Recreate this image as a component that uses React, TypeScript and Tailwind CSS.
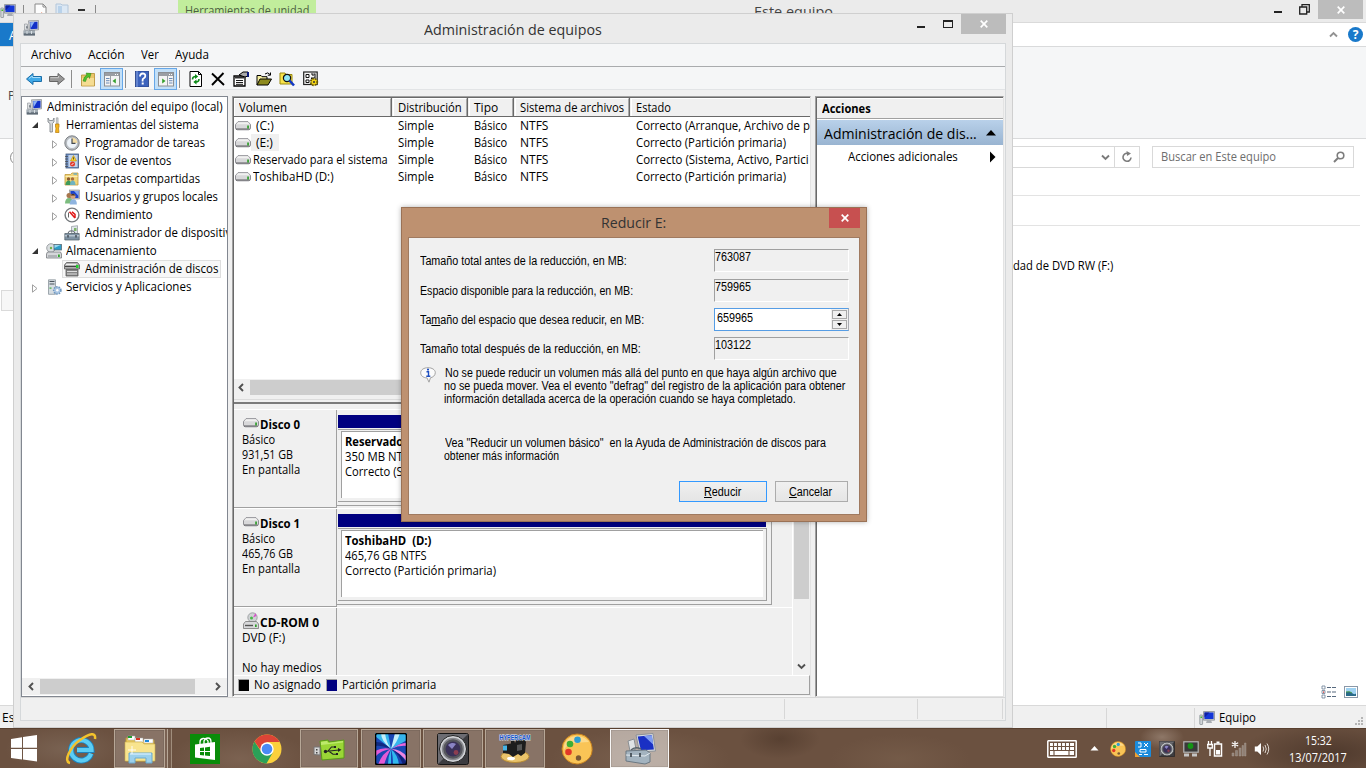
import { useLayoutEffect, useRef, useState } from 'react';
import type { ReactNode } from 'react';

function T({ w, children, className = '' }: { w: number; children: ReactNode; className?: string }) {
  const ref = useRef<HTMLSpanElement>(null);
  const [scale, setScale] = useState(1);
  useLayoutEffect(() => {
    if (ref.current && ref.current.offsetWidth) {
      setScale(w / ref.current.offsetWidth);
    }
  }, [w]);
  return (
    <span className={`inline-block shrink-0 whitespace-pre ${className}`} style={{ width: w }}>
      <span ref={ref} className="inline-block origin-left" style={{ transform: `scaleX(${scale})` }}>
        {children}
      </span>
    </span>
  );
}

function Svg({ children, s = 16, box = '0 0 16 16', className = '' }: { children: ReactNode; s?: number; box?: string; className?: string }) {
  return (
    <svg width={s} height={s} viewBox={box} className={`shrink-0 ${className}`}>
      {children}
    </svg>
  );
}

const ComputerIcon = () => (
  <Svg>
    <path d="M5.500.8l10-.3v9.300l-9 .7z" fill="#d3d6d9" stroke="#85898e" strokeWidth=".7" />
    <path d="M6.800 2l7.700-.3v7l-7 .6z" fill="#1230c8" />
    <path d="M7 2.200l4.500-.2-3.700 6z" fill="#8fb4f4" />
    <path d="M1.500 4h2.800l1 6h-3.800z" fill="#dfe2e4" stroke="#8a8f94" strokeWidth=".6" />
    <path d="M3.300 6.500l1-1 .5 3h-1.500z" fill="#58606a" />
    <path d="M.5 10.500h11.500v5H.5z" fill="#75818c" />
    <path d="M.5 12h11.500M4 11v3M8.500 11v3" stroke="#dfe5ea" strokeWidth=".9" />
    <path d="M1 14.800h11" stroke="#56616c" />
  </Svg>
);
const MonitorIcon = () => (
  <Svg>
    <path d="M4.500 1.500h11v8.700h-11z" fill="#bfc3c8" stroke="#8d9298" strokeWidth=".8" />
    <path d="M5.500 2.500h9v6.500h-9z" fill="#1336d8" />
    <path d="M5.500 2.500h5l-5 5z" fill="#1020a0" />
    <path d="M8 10h4l1 3H7z" fill="#a9adb2" />
    <rect x=".8" y="5" width="2.800" height="9.500" rx=".5" fill="#d2d5d8" stroke="#80868c" strokeWidth=".7" />
    <rect x="1.500" y="6.500" width="1.500" height="1.500" fill="#3ec02c" />
  </Svg>
);
const ToolsIcon = () => (
  <Svg>
    <path d="M2 1v4l2 1.500V15h2.400V6.500L8 5V1L6.800 3.500H3.400z" fill="#d9dcdf" stroke="#777c82" strokeWidth=".8" />
    <path d="M10.300.8h1.800v6h-1.800z" fill="#cfd3d6" stroke="#888" strokeWidth=".5" />
    <path d="M9.500 7h3.500v3l-.5 1 .5 4.500H9.500l.5-4.500-.5-1z" fill="#f5b51e" stroke="#b67a08" strokeWidth=".7" />
  </Svg>
);
const ClockIcon = () => (
  <Svg>
    <circle cx="8" cy="8" r="7.200" fill="#b9bdc2" stroke="#73777c" strokeWidth=".9" />
    <circle cx="8" cy="8" r="5.500" fill="#eef4fa" stroke="#9a9ea3" strokeWidth=".5" />
    <path d="M8 8V2.600A5.400 5.400 0 0 1 13.400 8z" fill="#f3dca4" />
    <path d="M8 3.500V8.300h3.500" fill="none" stroke="#444a52" strokeWidth="1.200" />
  </Svg>
);
const EventIcon = () => (
  <Svg>
    <rect x="2" y="1" width="12.500" height="14" fill="#6d8fc4" stroke="#42597e" strokeWidth=".8" />
    <rect x="4.500" y="2" width="9" height="12" fill="#c3d3ea" />
    <path d="M1 3.500h3M1 6h3M1 8.500h3M1 11h3M1 13.500h3" stroke="#444" strokeWidth=".7" />
    <path d="M9.500 2.500l3 5.500h-6z" fill="#ffd42e" stroke="#b88b00" strokeWidth=".6" />
    <path d="M9.500 4.300v2.200" stroke="#333" strokeWidth=".8" />
    <circle cx="8.500" cy="11" r="2.500" fill="#e23a2c" />
    <path d="M7.500 12l2-2" stroke="#fff" strokeWidth=".9" />
  </Svg>
);
const SharedIcon = () => (
  <Svg>
    <path d="M1 3.500h5.500L8 2h6v12H1z" fill="#f2d578" stroke="#c09a3c" strokeWidth=".8" />
    <path d="M9.500 3h3.500" stroke="#4aa3d8" strokeWidth="1.200" />
    <path d="M1.500 5.500h12" stroke="#fbecb4" />
    <circle cx="4.500" cy="8" r="1.700" fill="#8a5a30" />
    <circle cx="8.500" cy="8" r="1.700" fill="#a86c3c" />
    <path d="M1.500 14c0-3 1.500-4.500 3.200-4.500S7 11 7 14z" fill="#3f9a5a" />
    <path d="M6 14c0-3 1.200-4.500 2.800-4.500S11.500 11 11.500 14z" fill="#6fb3c0" />
  </Svg>
);
const UsersIcon = () => (
  <Svg>
    <rect x="5.500" y="1" width="10" height="9" fill="#c3c7cc" stroke="#888" strokeWidth=".6" />
    <rect x="6.500" y="2" width="8" height="7" fill="#1c44cc" />
    <path d="M10 2h4.500v5z" fill="#87a9ee" />
    <circle cx="5" cy="6.500" r="2.500" fill="#a8764c" />
    <path d="M1 14.500c0-3.500 1.500-5.500 4-5.500s4 2 4 5.500z" fill="#7cbc7e" />
    <circle cx="9" cy="7.300" r="2.500" fill="#d8a67c" />
    <path d="M6.700 6.500a2.500 2.500 0 0 1 4.700 0z" fill="#4a3424" />
    <path d="M5.700 15.500c0-3.500 1.300-5.300 3.600-5.300s3.600 1.800 3.600 5.300z" fill="#8fb4e0" />
  </Svg>
);
const PerfIcon = () => (
  <Svg>
    <circle cx="8" cy="8" r="6.900" fill="#fff" stroke="#74787c" strokeWidth="1.400" />
    <path d="M4.500 10.500V5.500" fill="none" stroke="#555" strokeWidth=".9" />
    <path d="M5.500 4.800l5.500 6.200M8 4.800l3 2.500v3.700" stroke="#e01818" fill="none" strokeWidth="1.500" />
  </Svg>
);
const DeviceIcon = () => (
  <Svg>
    <path d="M7.500 1.500l6-.8v7.800h-6z" fill="#dfe6ea" stroke="#8b9298" strokeWidth=".7" />
    <rect x="10" y="3" width="2.500" height="3" fill="#7fb56a" />
    <path d="M4 8l1.500-2h4L11 8" fill="none" stroke="#555d66" />
    <path d="M.8 8.500h14.400v6.500H.8z" fill="#7f93a4" stroke="#4f5b66" strokeWidth=".7" />
    <path d="M.8 10.800h14.400" stroke="#d3dce4" />
    <path d="M4 10v2.500M12 10v2.500" stroke="#2f3840" strokeWidth="1.200" />
  </Svg>
);
const StorageIcon = () => (
  <Svg>
    <circle cx="5" cy="5" r="4.300" fill="#d9dddf" stroke="#8c9094" strokeWidth=".8" />
    <circle cx="5" cy="5" r="1.200" fill="#71b048" />
    <rect x="8" y="1.500" width="7.500" height="5.500" fill="#2d9cc9" stroke="#5b6b74" strokeWidth=".8" />
    <path d="M8.500 2h6l-6 3z" fill="#9bd9ef" />
    <path d="M1.500 9h13l1 2v4h-15v-4z" fill="#d5d7da" stroke="#777b80" strokeWidth=".8" />
    <path d="M2 13h9" stroke="#8a8e93" />
    <rect x="12" y="11.500" width="1.800" height="2.500" fill="#2fa82a" />
  </Svg>
);
const DiskMgmtIcon = () => (
  <Svg>
    <path d="M2.500 1.500h11l2 2.500v4h-15V4z" fill="#b5b5b5" stroke="#555" strokeWidth=".8" />
    <path d="M1 5.500h11" stroke="#444" strokeWidth="1.100" />
    <path d="M2 3.500h10" stroke="#eee" />
    <rect x="12" y="4" width="2.500" height="3" fill="#1fd02a" />
    <path d="M2 8.500h12v6.500H2z" fill="#858585" stroke="#5a5a5a" strokeWidth=".8" />
    <path d="M3 10.500h10M3 13h10" stroke="#ddd" />
  </Svg>
);
const ServicesIcon = () => (
  <Svg>
    <path d="M2.500.8h7v14.500h-7z" fill="#d6dde2" stroke="#8b959d" strokeWidth=".8" />
    <path d="M3.500 2.500h5M3.500 5h5" stroke="#4a545c" strokeWidth="1.100" />
    <rect x="3.500" y="8.500" width="2" height="1.200" fill="#3fae3a" />
    <circle cx="11.300" cy="11.300" r="3.400" fill="#bcd3ea" stroke="#6f97c0" strokeWidth="2" strokeDasharray="1.500 .9" />
    <circle cx="11.300" cy="11.300" r="2.800" fill="#a8c4e2" />
    <circle cx="11.300" cy="11.300" r="1.200" fill="#fff" />
  </Svg>
);
const DriveIcon = ({ className = '' }: { className?: string }) => (
  <svg width="16" height="10" viewBox="0 0 16 10" className={`shrink-0 ${className}`}>
    <path d="M3 .7h10l2.500 2.800v3.500q0 1.800-2 1.800h-11q-2 0-2-1.800V3.500z" fill="#d8d8da" stroke="#85858a" strokeWidth=".9" />
    <path d="M3 1.200h10l1.800 2H1.300z" fill="#f0f0f0" />
    <path d="M1 8h13.500" stroke="#68686c" strokeWidth="1.100" />
    <rect x="12.200" y="4.500" width="1.700" height="3" fill="#2f9e2a" />
  </svg>
);
const CdIcon = () => (
  <svg width="16" height="18" viewBox="0 0 16 18" className="shrink-0">
    <circle cx="9.500" cy="5.500" r="4.700" fill="#cfd2d4" stroke="#929698" strokeWidth=".8" />
    <path d="M10 5.500l2.500-4.500 1 3z" fill="#d453c8" />
    <circle cx="8.500" cy="6" r="1.500" fill="#49b64a" />
    <path d="M2.500 9.500h11l2 2.500v4.500H.5V12z" fill="#d7d8da" stroke="#777" strokeWidth=".8" />
    <path d="M2 13.500h8" stroke="#555" strokeWidth="1.400" />
    <rect x="12" y="12.500" width="1.700" height="2.500" fill="#2f9e2a" />
  </svg>
);

const Chevron = ({ dir, color = '#505050' }: { dir: 'l' | 'r' | 'd' | 'u'; color?: string }) => {
  const d = { l: 'M6 1L2.500 4.500 6 8', r: 'M3 1L6.500 4.500 3 8', d: 'M1 2.500L4.500 6 8 2.500', u: 'M1 6.500L4.500 3 8 6.500' }[dir];
  return (
    <Svg s={9} box="0 0 9 9">
      <path d={d} fill="none" stroke={color} strokeWidth="1.900" />
    </Svg>
  );
};

const CloseX = ({ s = 8 }: { s?: number }) => (
  <Svg s={s} box="0 0 8 8">
    <path d="M.7.7l6.600 6.600M7.300.7L.7 7.300" stroke="#fff" strokeWidth="1.700" />
  </Svg>
);

/* ---------- Explorer window, mostly covered ---------- */
function Explorer() {
  return (
    <div className="absolute left-0 top-0 flex h-[728px] w-[1366px] flex-col bg-white">
      <div className="flex h-[23px] shrink-0 border-b border-[#dadada] bg-[#ebebeb]">
        <div className="flex w-[178px] gap-[7px] pt-[3px]">
          <MonitorIcon />
          <div className="mt-0.5 h-4 w-px bg-[#8a8a8a]" />
          <Svg className="ml-px">
            <path d="M3 1h8l3 3v12H3z" fill="#fdfdfd" stroke="#8a8a8a" />
            <path d="M11 1v3h3" fill="none" stroke="#8a8a8a" />
            <path d="M9 9l6 4-4 1z" fill="#e2744a" />
          </Svg>
          <Svg>
            <path d="M1 1h5l1 1h6v14H1z" fill="#dce8f4" stroke="#b3c6da" />
            <path d="M3 3h4v12H3z" fill="#b9d2ea" />
          </Svg>
          <div className="mt-[6px] h-[2px] w-[7px] bg-[#333]" />
          <div className="ml-[3px] mt-0.5 h-4 w-px bg-[#8a8a8a]" />
        </div>
        <div className="h-[22px] w-[138px] bg-[#c1ed9c] pl-[7px] pt-px leading-[19px] text-[#4d5f42]">
          <T w={124}>Herramientas de unidad</T>
        </div>
        <div className="ml-[438px] text-[15px] leading-[23px] text-[#444]">
          <T w={79}>Este equipo</T>
        </div>
        <div className="ml-auto flex">
          <div className="mr-[17px] mt-[11px] h-[2px] w-2 bg-[#222]" />
          <Svg s={11} box="0 0 11 11" className="mr-[8px] mt-1">
            <path d="M.7 3h7v7h-7zM3 3V.7h7.300v7.300H8" fill="none" stroke="#222" strokeWidth="1.300" />
          </Svg>
          <div className="mr-[3px] flex h-[19px] w-[45px] items-center justify-center bg-[#bcbcbc]">
            <CloseX />
          </div>
        </div>
      </div>
      <div className="flex h-[24px] shrink-0 border-b border-[#d9dadb] bg-white">
        <div className="h-[23px] w-[60px] bg-[#1979ca] pl-[9px] leading-[25px] text-white">Archivo</div>
        <div className="ml-auto flex items-center gap-[10px] pr-[3px]">
          <Chevron dir="u" color="#929292" />
          <div className="flex h-[15px] w-[15px] items-center justify-center rounded-full bg-[#1979ca] text-[12px] font-bold leading-none text-white">?</div>
        </div>
      </div>
      <div className="h-[92px] shrink-0 border-b border-[#d9dadb] bg-[#f5f6f7] pl-2 pt-[41px] leading-4 text-[#444]">Propiedades</div>
      <div className="flex h-[56px] shrink-0 pt-[7px]">
        <div className="ml-[10px] mt-1 h-[15px] w-[15px] rounded-full border border-[#8a8a8a]" />
        <div className="ml-auto flex h-[22px] w-[900px] items-center justify-end border border-[#d9d9d9] text-[#6d6d6d]">
          <Chevron dir="d" color="#7a7a7a" />
          <div className="ml-[4px] h-full w-px bg-[#d9d9d9]" />
          <Svg s={12} box="0 0 12 12" className="mx-[6px]">
            <path d="M10 6.500A4 4 0 1 1 6.500 2.300" fill="none" stroke="#7d7d7d" strokeWidth="1.600" />
            <path d="M5.500 0l4.500 2.500L6 5z" fill="#7d7d7d" />
          </Svg>
        </div>
        <div className="ml-3 mr-[12px] flex h-[22px] w-[202px] items-center justify-between border border-[#d9d9d9] px-2 leading-5 text-[#6d6d6d]">
          <T w={115}>Buscar en Este equipo</T>
          <Svg s={12} box="0 0 12 12">
            <circle cx="7.500" cy="4.500" r="3.300" fill="none" stroke="#7d7d7d" strokeWidth="1.600" />
            <path d="M5 7L1 11" stroke="#7d7d7d" strokeWidth="2" />
          </Svg>
        </div>
      </div>
      <div className="ml-[200px] mr-[6px] h-[31px] shrink-0 border-b border-t border-[#e3e3e3]" />
      <div className="flex flex-1">
        <div className="ml-px mt-[64px] h-[21px] w-[40px] border border-[#dadada] bg-[#f7f7f7]" />
        <div className="ml-[972px] mt-[30px] leading-5">
          <T w={100}>dad de DVD RW (F:)</T>
        </div>
        <div className="ml-auto mr-[7px] flex items-end gap-[6px] pb-[5px]">
          <Svg>
            <path d="M1 2h3v3H1zM1 6.500h3v3H1zM1 11h3v3H1z" fill="#fff" stroke="#6b7f96" strokeWidth=".8" />
            <rect x="2" y="7.500" width="1.200" height="1.200" fill="#d02020" />
            <path d="M6 3.500h4M11 3.500h4M6 8h4M11 8h4M6 12.500h4M11 12.500h4" stroke="#56687e" strokeWidth="1.200" />
          </Svg>
          <Svg>
            <rect x="1.500" y="2.500" width="13" height="11" fill="#fff" stroke="#8a98a8" />
            <rect x="3" y="4" width="10" height="8" fill="#9fd2f2" />
            <path d="M3 12V8q4-1 6 1t4 .5V12z" fill="#286a8a" />
            <path d="M3 8q4-1 6 1" stroke="#4a9a48" fill="none" />
          </Svg>
        </div>
      </div>
      <div className="flex h-[23px] shrink-0 items-center border-t border-[#d9d9d9] bg-[#f0f0f0] pt-px">
        <span className="w-[1106px] pl-0.5">Este equipo</span>
        <div className="h-5 w-[88px] border-l border-[#d7d7d7]" />
        <div className="flex h-5 flex-1 items-center gap-1 border-l border-[#d7d7d7] pl-1">
          <MonitorIcon />
          <T w={37}>Equipo</T>
          <Svg s={9} box="0 0 9 9" className="ml-auto mr-[2px] mt-2">
            <path d="M6 0h2v2H6zM3 3h2v2H3zM6 3h2v2H6zM0 6h2v2H0zM3 6h2v2H3zM6 6h2v2H6z" fill="#b5b5b5" />
          </Svg>
        </div>
      </div>
    </div>
  );
}

/* ---------- Toolbar ---------- */
const Sep = ({ className = '' }: { className?: string }) => <div className={`h-[18px] w-px bg-[#8d8d8d] ${className}`} />;

const PaneIcon = ({ flip = false }: { flip?: boolean }) => (
  <Svg>
    <rect x=".5" y="1.500" width="15" height="13.500" fill="#f4f4f4" stroke="#8b8f94" />
    <path d="M1 3.500h14" stroke="#9a9ea4" strokeWidth="3" />
    <path d="M11 3.500h1M13 3.500h1" stroke="#fff" />
    {flip ? (
      <>
        <path d="M9.500 5v10" stroke="#9a9ea4" />
        <path d="M11 7.500h3.500M11 9.700h3.500M11 12h3.500" stroke="#6b8cb8" />
        <path d="M4.200 7.500v5L7.500 10z" fill="#35a02c" />
      </>
    ) : (
      <>
        <path d="M6.500 5v10" stroke="#9a9ea4" />
        <path d="M2 7.500h3.500M2 9.700h3.500M2 12h3.500" stroke="#6b8cb8" />
        <path d="M11.800 7.500v5L8.500 10z" fill="#35a02c" />
      </>
    )}
  </Svg>
);

function Toolbar() {
  return (
    <div className="flex h-[23px] shrink-0 items-center border-b border-[#e2e4e6] bg-[#f5f6f7] pl-[5px] pt-px">
      <Svg>
        <path d="M.5 8L7 2.500v3h8.500v5H7v3z" fill="#3fa9e8" stroke="#1c6ea8" />
        <path d="M3 7.500L6.300 5v1.500h8" fill="none" stroke="#a5dcfa" />
      </Svg>
      <Svg className="ml-[7px]">
        <path d="M15.500 8L9 2.500v3H.5v5H9v3z" fill="#989898" stroke="#666" />
        <path d="M1.500 6.700h8V5" fill="none" stroke="#c8c8c8" />
      </Svg>
      <Sep className="ml-[6px]" />
      <Svg className="ml-[8px]">
        <path d="M1.500 4h5l1-1.500h7V15h-13z" fill="#eac56a" stroke="#b48d34" strokeWidth=".8" />
        <path d="M2 7h12v7.500H2z" fill="#f5dc92" />
        <path d="M3 10q1-5 4-6L6 2l5 .5-1.500 5-1-2q-2 1-3 5z" fill="#4fc02c" stroke="#2a8418" strokeWidth=".5" />
      </Svg>
      <div className="ml-[4px] flex h-[22px] w-[23px] items-center justify-center border border-[#66a7e8] bg-[#c2dff7]"><PaneIcon /></div>
      <Sep className="ml-[2px]" />
      <Svg className="ml-[8px]">
        <rect x="1.500" y="0" width="13" height="16" fill="#3c63bd" stroke="#1e3a80" strokeWidth=".8" />
        <path d="M3 0v16" stroke="#87a4e2" />
        <path d="M6 5.500q0-3 2.700-3t2.600 2.600q0 1.400-1.500 2.200T8.600 9.500v1" fill="none" stroke="#fff" strokeWidth="1.800" />
        <rect x="7.700" y="11.500" width="2" height="2" fill="#fff" />
      </Svg>
      <div className="ml-[4px] flex h-[22px] w-[23px] items-center justify-center border border-[#66a7e8] bg-[#c2dff7]"><PaneIcon flip /></div>
      <Sep className="ml-[2px]" />
      <Svg className="ml-[8px]">
        <path d="M2 .5h8.500l3 3v12H2z" fill="#fff" stroke="#000" />
        <path d="M10.500.5v3h3" fill="none" stroke="#000" />
        <path d="M4.500 8.500q0-3 3-3M11 8q0 3-3 3" fill="none" stroke="#0d8a18" strokeWidth="1.500" />
        <path d="M7 3l3.200 2.500L7 8zM8.500 8.500L5.300 11l3.200 2.500z" fill="#0d8a18" />
      </Svg>
      <Svg className="ml-[6px]">
        <path d="M2 2.500L14 14M13.500 2L2 14" stroke="#000" strokeWidth="1.900" />
      </Svg>
      <Svg className="ml-[7px]">
        <path d="M1 5h11v10H1z" fill="#fff" stroke="#000" strokeWidth="1.300" />
        <path d="M2 5h9v2.500H2z" fill="#333" />
        <path d="M3 9.500h7M3 11.500h7M3 13.300h7" stroke="#000" strokeWidth=".9" />
        <path d="M6 4l4-3h5v4l-3 1-3-1z" fill="#aaa" stroke="#000" />
        <path d="M14 1h2v5h-2z" fill="#0b1a7a" />
      </Svg>
      <Svg className="ml-[7px]">
        <path d="M1 14V4.500h4l1 1.200h5V8" fill="#f7f0a0" stroke="#000" />
        <path d="M1 14l3-6h11.500L12 14z" fill="#8d8a1e" stroke="#000" />
        <path d="M9 3q3-2.500 5 .5M14.500 1.500v2.700h-2.700" fill="none" stroke="#000" />
      </Svg>
      <Svg className="ml-[7px]">
        <path d="M1 2h5l1 1.500h6V13H1z" fill="#f8e34a" stroke="#9a8a10" />
        <circle cx="8" cy="7" r="3.600" fill="#8fe6f5" stroke="#111" strokeWidth="1.200" />
        <path d="M10.500 9.500l4.500 5" stroke="#1238c4" strokeWidth="2.600" />
      </Svg>
      <Svg className="ml-[8px]">
        <rect x=".7" y="1" width="13.500" height="12.500" fill="#f5f5f5" stroke="#222" strokeWidth="1.200" />
        <path d="M3 3.500h3v3H3zM3 9h3v2.500H3z" fill="#fff" stroke="#111" />
        <path d="M8 3h2v2M11 3h1v4H8M8 8h2" stroke="#111" fill="none" strokeWidth="1.100" />
        <circle cx="11" cy="11" r="3.200" fill="#f2d418" stroke="#6a5a00" strokeWidth="2" strokeDasharray="1.600 1" />
        <circle cx="11" cy="11" r="2.400" fill="#f2d418" />
        <circle cx="11" cy="11" r="1" fill="#333" />
      </Svg>
    </div>
  );
}

/* ---------- Tree ---------- */
type Node = { level: number; arrow?: 'open' | 'closed'; icon: ReactNode; label: string; w: number; sel?: boolean };
const tree: Node[] = [
  { level: 0, icon: <ComputerIcon />, label: 'Administración del equipo (local)', w: 176 },
  { level: 1, arrow: 'open', icon: <ToolsIcon />, label: 'Herramientas del sistema', w: 133 },
  { level: 2, arrow: 'closed', icon: <ClockIcon />, label: 'Programador de tareas', w: 120 },
  { level: 2, arrow: 'closed', icon: <EventIcon />, label: 'Visor de eventos', w: 86 },
  { level: 2, arrow: 'closed', icon: <SharedIcon />, label: 'Carpetas compartidas', w: 115 },
  { level: 2, arrow: 'closed', icon: <UsersIcon />, label: 'Usuarios y grupos locales', w: 133 },
  { level: 2, arrow: 'closed', icon: <PerfIcon />, label: 'Rendimiento', w: 68 },
  { level: 2, icon: <DeviceIcon />, label: 'Administrador de dispositivos', w: 158 },
  { level: 1, arrow: 'open', icon: <StorageIcon />, label: 'Almacenamiento', w: 91 },
  { level: 2, icon: <DiskMgmtIcon />, label: 'Administración de discos', w: 133, sel: true },
  { level: 1, arrow: 'closed', icon: <ServicesIcon />, label: 'Servicios y Aplicaciones', w: 125 },
];
const indent = ['pl-[4px]', 'pl-[9px]', 'pl-[29px]'];

function Tree() {
  return (
    <div className="flex w-[207px] shrink-0 flex-col overflow-hidden border border-[#828790] bg-white pt-px">
      {tree.map((n) => (
        <div key={n.label} className={`flex h-[18px] shrink-0 items-center ${indent[n.level]}`}>
          {n.level > 0 && (
            <span className={n.level === 1 ? 'flex w-[15px] shrink-0' : 'flex w-[13px] shrink-0'}>
              {n.arrow === 'closed' && (
                <Svg s={9} box="0 0 9 9" className="mt-0.5">
                  <path d="M1.500.8v7.400L6 4.500z" fill="#fff" stroke="#a0a0a0" />
                </Svg>
              )}
              {n.arrow === 'open' && (
                <Svg s={8} box="0 0 8 8">
                  <path d="M7 1v6H1z" fill="#333" />
                </Svg>
              )}
            </span>
          )}
          <div className={`flex h-[18px] shrink-0 items-center border-y border-r ${n.sel ? 'ml-[-2px] border-l border-[#dedede] bg-[#f7f7f7] pl-px pr-[2px]' : 'border-transparent'}`}>
            {n.icon}
            <T w={n.w} className={n.level === 1 ? 'ml-[4px]' : 'ml-[5px]'}>{n.label}</T>
          </div>
        </div>
      ))}
      <div className="mb-px mt-auto flex h-[17px] items-center bg-[#f0f0f0]">
        <div className="flex w-[18px] justify-center"><Chevron dir="l" /></div>
        <div className="h-[15px] w-[155px] bg-[#cdcdcd]" />
        <div className="flex flex-1 justify-end pr-[5px]"><Chevron dir="r" /></div>
      </div>
    </div>
  );
}

/* ---------- Volumes and disks ---------- */
const volumes = [
  { name: '(C:)', w: 18, pad: 'pl-[5px]', status: 'Correcto (Arranque, Archivo de p', sw: 174 },
  { name: '(E:)', w: 17, pad: 'pl-[5px] pr-[6px] bg-[#f0f0f0]', status: 'Correcto (Partición primaria)', sw: 150 },
  { name: 'Reservado para el sistema', w: 135, pad: 'pl-[2px]', status: 'Correcto (Sistema, Activo, Partici', sw: 173 },
  { name: 'ToshibaHD (D:)', w: 81, pad: 'pl-[2px]', status: 'Correcto (Partición primaria)', sw: 150 },
];

function Head({ cls, w, children }: { cls: string; w: number; children: string }) {
  return (
    <div className={`flex h-full shrink-0 items-center border-r border-[#696969] ${cls}`}>
      <div className="flex h-full w-full items-center border-l border-r border-t border-l-white border-r-[#a8a8a8] border-t-white pl-[4px]">
        <T w={w}>{children}</T>
      </div>
    </div>
  );
}

function VolumeList() {
  return (
    <div className="flex h-[306px] shrink-0 flex-col overflow-hidden bg-white">
      <div className="flex h-[19px] shrink-0 border-b border-[#696969] bg-[#f0f0f0]">
        <Head cls="w-[158px]" w={48}>Volumen</Head>
        <Head cls="w-[76px] pl-px" w={64}>Distribución</Head>
        <Head cls="w-[46px] pl-px" w={24}>Tipo</Head>
        <Head cls="w-[116px] pl-px" w={104}>Sistema de archivos</Head>
        <Head cls="w-[190px] pl-px" w={35}>Estado</Head>
      </div>
      {volumes.map((v) => (
        <div key={v.name} className="flex h-[17px] shrink-0 items-center">
          <div className="flex h-full w-[164px] shrink-0 items-center pl-px">
            <DriveIcon />
            <span className={`flex h-full items-center ${v.pad}`}><T w={v.w}>{v.name}</T></span>
          </div>
          <T w={36} className="mr-[40px]">Simple</T>
          <T w={33} className="mr-[13px]">Básico</T>
          <T w={28} className="mr-[88px]">NTFS</T>
          <T w={v.sw}>{v.status}</T>
        </div>
      ))}
      <div className="mt-auto flex h-[17px] shrink-0 items-center bg-[#f0f0f0]">
        <div className="flex w-[16px] shrink-0 justify-center pr-px"><Chevron dir="l" /></div>
        <div className="h-[15px] w-[480px] bg-[#cdcdcd]" />
      </div>
      <div className="h-[6px] shrink-0 bg-[#f0f0f0] pt-[3px]"><div className="h-px bg-[#dcdcdc]" /></div>
      <div className="h-[2px] shrink-0 bg-[#7b7b7b]" />
    </div>
  );
}

type Line = { t: string; w: number };
function DiskRow({ icon, name, nw, lines, part }: { icon: ReactNode; name: string; nw: number; lines: Line[]; part?: Line[] }) {
  return (
    <div className="flex h-[99px] w-[559px] shrink-0 border-t border-white">
      <div className="flex w-[103px] shrink-0 flex-col border-b border-r border-[#a0a0a0] pl-[8px] pt-[6px]">
        <div className="flex h-[16px] items-end pl-px font-bold leading-[15px]">{icon}<T w={nw} className="ml-px">{name}</T></div>
        {lines.map((l, i) => (
          <div key={i} className="h-[15px] leading-[15px]"><T w={l.w}>{l.t}</T></div>
        ))}
      </div>
      {part && (
        <div className="mb-[2px] flex w-[435px] flex-col border-b border-r border-[#a0a0a0] pl-px pr-[4px] pt-[5px]">
          <div className="h-[13px] w-[428px] bg-[#000080]" />
          <div className="mb-[3px] mt-px flex flex-1 border-b border-r border-t border-[#a0a0a0] pb-[3px] pl-[3px] pr-[3px] pt-px">
            <div className="flex-1 border-l border-t border-[#a0a0a0] bg-white pl-[3px] pt-[2px] leading-[15px]">
              {part.map((l, i) => (
                <div key={i} className={i === 0 ? 'h-[15px] font-bold' : 'h-[15px]'}><T w={l.w}>{l.t}</T></div>
              ))}
            </div>
          </div>
        </div>
      )}
    </div>
  );
}

function Middle() {
  return (
    <div className="ml-1 flex w-[579px] shrink-0 border border-b-[#f8f8f8] border-l-[#a0a0a0] border-r-[#e3e3e3] border-t-[#a0a0a0]">
      <div className="flex min-w-0 flex-1 flex-col overflow-hidden border-l border-t border-[#696969] bg-[#f0f0f0]">
        <VolumeList />
        <div className="flex h-[271px] shrink-0 overflow-hidden">
          <div className="flex h-full w-[559px] flex-col border-r border-white pt-[5px]">
            <DiskRow
              icon={<DriveIcon className="mb-[4px]" />}
              name="Disco 0"
              nw={40}
              lines={[{ t: 'Básico', w: 33 }, { t: '931,51 GB', w: 51 }, { t: 'En pantalla', w: 58 }]}
              part={[{ t: 'Reservado para el sistema', w: 146 }, { t: '350 MB NTFS', w: 70 }, { t: 'Correcto (Sistema)', w: 96 }]}
            />
            <DiskRow
              icon={<DriveIcon className="mb-[4px]" />}
              name="Disco 1"
              nw={40}
              lines={[{ t: 'Básico', w: 33 }, { t: '465,76 GB', w: 51 }, { t: 'En pantalla', w: 58 }]}
              part={[{ t: 'ToshibaHD  (D:)', w: 86 }, { t: '465,76 GB NTFS', w: 82 }, { t: 'Correcto (Partición primaria)', w: 151 }]}
            />
            <DiskRow
              icon={<CdIcon />}
              name="CD-ROM 0"
              nw={59}
              lines={[{ t: 'DVD (F:)', w: 43 }, { t: ' ', w: 3 }, { t: 'No hay medios', w: 80 }]}
            />
          </div>
          <div className="flex w-[17px] flex-col items-center justify-between pb-[4px]">
            <div className="h-[195px] w-[15px] bg-[#cdcdcd]" />
            <Chevron dir="d" />
          </div>
        </div>
        <div className="flex h-[20px] shrink-0 items-center border-b border-r border-t border-b-[#a0a0a0] border-r-[#a0a0a0] border-t-white bg-[#f0f0f0] pl-[4px]">
          <div className="h-[12px] w-[11px] border-l border-t border-[#a0a0a0] bg-black" />
          <T w={67} className="ml-[5px]">No asignado</T>
          <div className="ml-[5px] h-[12px] w-[11px] border-l border-t border-[#a0a0a0] bg-[#000080]" />
          <T w={94} className="ml-[5px]">Partición primaria</T>
        </div>
      </div>
    </div>
  );
}

function Actions() {
  return (
    <div className="ml-1 flex w-[189px] shrink-0 border border-b-[#e3e3e3] border-l-[#a0a0a0] border-r-[#e3e3e3] border-t-[#a0a0a0]">
      <div className="flex-1 border-l border-t border-[#696969] bg-white">
        <div className="mt-px h-[20px] border-b border-[#a0a0a0] bg-[#f0f0f0] pl-[5px] font-bold leading-[20px]"><T w={49}>Acciones</T></div>
        <div className="mt-px flex h-[25px] items-center justify-between bg-gradient-to-b from-[#b9d1ea] to-[#99b4d1] pl-[7px] pr-[7px] text-[15px]">
          <T w={153}>Administración de dis...</T>
          <Svg s={10} box="0 0 10 10"><path d="M5 2l5 5.500H0z" fill="#000" /></Svg>
        </div>
        <div className="flex h-[24px] items-center justify-between pl-[31px] pr-[7px]">
          <T w={110}>Acciones adicionales</T>
          <Svg s={12} box="0 0 12 12"><path d="M6 .5v11l5.500-5.500z" fill="#000" /></Svg>
        </div>
      </div>
    </div>
  );
}

function Management() {
  return (
    <div className="absolute left-[13px] top-[13px] flex h-[715px] w-[1000px] flex-col border border-[#cfcfcf] bg-[#ebebeb] px-[6px] pb-[6px]">
      <div className="flex h-[29px] shrink-0">
        <div className="ml-[3px] mt-[6px]"><ComputerIcon /></div>
        <div className="ml-[385px] text-[15px] leading-[30px] text-[#333]"><T w={178}>Administración de equipos</T></div>
        <div className="ml-auto flex">
          <div className="mr-[18px] mt-[12px] h-[2px] w-2 bg-[#222]" />
          <div className="mr-[8px] mt-[6px] h-[8px] w-[10px] border border-t-2 border-[#222]" />
          <div className="flex h-[20px] w-[45px] items-center justify-center bg-[#bcbcbc]"><CloseX /></div>
        </div>
      </div>
      <div className="flex flex-1 flex-col border border-[#d5d8da] bg-[#f0f0f0]">
        <div className="flex h-[23px] shrink-0 items-center gap-4 border-b border-[#a9abad] bg-[#f5f6f7] pl-[10px]">
          <T w={41}>Archivo</T>
          <T w={37}>Acción</T>
          <T w={18}>Ver</T>
          <T w={34}>Ayuda</T>
        </div>
        <Toolbar />
        <div className="flex h-[607px] shrink-0 pt-[6px]">
          <Tree />
          <Middle />
          <Actions />
        </div>
        <div className="flex flex-1 justify-end border-t border-[#d7d7d7] py-px">
          <div className="w-[133px] border-l border-[#d7d7d7]" />
          <div className="w-[86px] border-l border-r border-[#d7d7d7]" />
          <div className="w-[2px]" />
        </div>
      </div>
    </div>
  );
}

/* ---------- Dialog ---------- */
const Field = ({ children }: { children: string }) => (
  <div className="h-[23px] w-[135px] border border-b-white border-l-[#a0a0a0] border-r-white border-t-[#a0a0a0] leading-[15px]">
    <T w={36}>{children}</T>
  </div>
);

function ShrinkDialog() {
  return (
    <div className="absolute left-[401px] top-[207px] flex h-[315px] w-[466px] flex-col border border-[#9a7256] bg-[#be9170] px-[6px] pb-[6px] shadow-[0_0_5px_rgba(0,0,0,0.3)]">
      <div className="flex h-[29px] shrink-0 text-[15px] leading-[28px] text-[#333]">
        <T w={65} className="ml-[193px]">Reducir E:</T>
        <div className="ml-auto flex h-[20px] w-[31px] items-center justify-center bg-[#c75050]"><CloseX /></div>
      </div>
      <div className="flex flex-1 flex-col border border-[#a07a60] bg-[#f0f0f0] pl-[11px] pr-[10px] pt-[11px] font-['Liberation_Sans',sans-serif] text-[12px]">
        <div className="flex h-[30px] shrink-0 justify-between"><T w={207} className="leading-[24px]">Tamaño total antes de la reducción, en MB:</T><Field>763087</Field></div>
        <div className="flex h-[29px] shrink-0 justify-between"><T w={213} className="leading-[24px]">Espacio disponible para la reducción, en MB:</T><Field>759965</Field></div>
        <div className="flex h-[29px] shrink-0 justify-between">
          <T w={224} className="leading-[24px]">Ta<u>m</u>año del espacio que desea reducir, en MB:</T>
          <div className="flex h-[23px] w-[135px] border border-[#569de5] border-r-[#abadb3] bg-white pl-[2px] leading-[18px]">
            <T w={36}>659965</T>
            <div className="ml-auto flex flex-col gap-px bg-[#f0f0f0] p-px">
              <div className="flex h-[9px] w-[15px] items-center justify-center border border-[#a9a9a9]"><Svg s={5} box="0 0 5 5"><path d="M2.500 1L5 4H0z" /></Svg></div>
              <div className="flex h-[9px] w-[15px] items-center justify-center border border-[#a9a9a9]"><Svg s={5} box="0 0 5 5"><path d="M2.500 4L5 1H0z" /></Svg></div>
            </div>
          </div>
        </div>
        <div className="flex h-[29px] shrink-0 justify-between"><T w={221} className="leading-[24px]">Tamaño total después de la reducción, en MB:</T><Field>103122</Field></div>
        <div className="flex shrink-0 pt-px">
          <Svg>
            <path d="M8 .7c4 0 7.300 2 7.300 5S12.500 10.500 10.500 10.700l-1.500 4.500L7 10.900C3 10.700.7 8.700.7 5.700S4 .7 8 .7z" fill="#fbfbfb" stroke="#a2a2a2" />
            <path d="M6.500 4.700h2v4.800M6.300 9.300h4" fill="none" stroke="#1f4fc0" strokeWidth="1.400" />
            <circle cx="8" cy="2.600" r="1.100" fill="#1f4fc0" />
          </Svg>
          <div className="ml-2 flex flex-col leading-[13px]">
            <T w={392} className="ml-px">No se puede reducir un volumen más allá del punto en que haya algún archivo que</T>
            <T w={401}>no se pueda mover. Vea el evento "defrag" del registro de la aplicación para obtener</T>
            <T w={352}>información detallada acerca de la operación cuando se haya completado.</T>
            <T w={381} className="ml-px mt-[31px]">Vea "Reducir un volumen básico"  en la Ayuda de Administración de discos para</T>
            <T w={115}>obtener más información</T>
          </div>
        </div>
        <div className="mt-[18px] flex shrink-0 justify-end gap-2 pr-px leading-[20px]">
          <div className="flex h-[21px] w-[88px] justify-center border border-[#3399ff] bg-gradient-to-b from-[#f0f0f0] to-[#e5e5e5] pr-px"><T w={37}><u>R</u>educir</T></div>
          <div className="flex h-[21px] w-[73px] justify-center border border-[#acacac] bg-gradient-to-b from-[#f0f0f0] to-[#e5e5e5] pr-[2px]"><T w={43}><u>C</u>ancelar</T></div>
        </div>
      </div>
    </div>
  );
}

/* ---------- Taskbar ---------- */
const Palette = ({ s, className = '' }: { s: number; className?: string }) => (
  <Svg s={s} box="0 0 32 32" className={className}>
    <path d="M16 1a15 15 0 1 0 0 30c4 0 12-3 14.500-10C33 12 28 1 16 1z" fill="#f9c456" stroke="#c8811e" />
    <path d="M15 3a13 12 0 0 0-12 14C8 8 16 10 28 9c-3-4-8-6-13-6z" fill="#fcd98a" />
    <circle cx="7.500" cy="19" r="3.300" fill="#e23828" />
    <circle cx="9" cy="11" r="3.300" fill="#3fae34" />
    <circle cx="16.500" cy="6.800" r="3.300" fill="#2f9cd0" />
    <circle cx="17.500" cy="25" r="2.700" fill="#7a5a34" />
  </Svg>
);
const Camera = ({ s, className = '' }: { s: number; className?: string }) => (
  <Svg s={s} box="0 0 32 32" className={className}>
    <rect x=".5" y=".5" width="31" height="31" rx="2" fill="#3c3c40" stroke="#151515" />
    <path d="M1 1h30L1 31z" fill="#6c6c72" />
    <circle cx="16" cy="16" r="13.500" fill="#d0d2d6" stroke="#222" />
    <circle cx="16" cy="16" r="10.500" fill="#55565c" stroke="#88898e" strokeWidth="1.500" />
    <circle cx="16" cy="16" r="7.500" fill="#3a3158" />
    <path d="M11 12a6 6 0 0 1 8-1l-4 5z" fill="#8a84c4" />
    <circle cx="19" cy="19.500" r="2.400" fill="#8c3e50" />
  </Svg>
);

function Btn({ children, on = false, cls }: { children?: ReactNode; on?: boolean; cls: string }) {
  return (
    <div className={`flex h-[39px] shrink-0 items-center justify-center border shadow-[inset_0_0_0_0.5px_rgba(0,0,0,0.15)] ${on ? 'border-white/90 bg-white/50' : 'border-[#b7a797] bg-white/20'} ${cls}`}>
      {children}
    </div>
  );
}

function Taskbar() {
  return (
    <div className="absolute left-0 top-[728px] flex h-[40px] w-[1366px] items-center overflow-hidden border-t border-[#59402f] bg-[#6b5140] bg-[radial-gradient(ellipse_60px_24px_at_65px_20px,rgba(135,115,100,0.5),transparent),radial-gradient(ellipse_70px_30px_at_240px_30px,rgba(140,115,98,0.5),transparent),radial-gradient(ellipse_90px_30px_at_640px_30px,rgba(130,105,86,0.6),transparent),radial-gradient(ellipse_40px_20px_at_780px_10px,rgba(60,40,28,0.4),transparent),radial-gradient(ellipse_70px_25px_at_900px_30px,rgba(125,100,80,0.5),transparent),radial-gradient(ellipse_22px_12px_at_1162px_8px,rgba(165,145,130,0.6),transparent),radial-gradient(ellipse_90px_30px_at_1330px_24px,rgba(60,42,32,0.6),transparent)]">
      <Svg s={27} box="0 0 27 27" className="ml-[11px]">
        <path d="M0 4l11-1.700v10.500H0zM12 2L26 0v12.800H12zM0 14h11v10.500L0 23zM12 14h14v12.500l-14-2z" fill="#fff" />
      </Svg>
      <Svg s={32} box="0 0 32 32" className="ml-[27px]">
        <path d="M26 20.500A10.200 10.200 0 1 1 26.500 17H12" fill="none" stroke="#1c83bf" strokeWidth="6" />
        <path d="M26 20.500A10.200 10.200 0 1 1 26.500 17H12" fill="none" stroke="#5ccdf4" strokeWidth="4.200" />
        <path d="M5 30C-2 29 5 14 15 7S31-1 30 6" fill="none" stroke="#f3c22c" strokeWidth="2.500" />
      </Svg>
      <Btn cls="ml-[17px] w-[51px]">
        <Svg s={32} box="0 0 32 32">
          <path d="M2 5h9l2 2h17v21H2z" fill="#e9c95c" stroke="#b8963c" />
          <path d="M4 3h7v4H4zM11 5h8v4h-8zM20 6h9v4h-9z" fill="#fff" stroke="#aaa" strokeWidth=".5" />
          <path d="M4 3h4v2H4z" fill="#20a030" /><path d="M12 5h4v2h-4z" fill="#d83020" /><path d="M21 7h4v2h-4z" fill="#2088d8" />
          <path d="M1 9h17l2 2h11v17H1z" fill="#f8e48e" stroke="#cfae4c" strokeWidth=".6" />
          <path d="M5 30V20h23v10h-6v-5H11v5z" fill="#9bd0ec" stroke="#6aaacf" />
          <path d="M6 21h21" stroke="#cdeafa" strokeWidth="1.500" />
          <path d="M8 13v8M4 17h8" stroke="#fff" strokeWidth=".9" />
        </Svg>
      </Btn>
      <div className="h-[39px] w-[3px] border-r border-[#b7a797] bg-white/10" />
      <div className="h-[39px] w-[4px] border-r border-[#a08d7c] bg-white/5" />
      <div className="ml-[18px] flex h-[30px] w-[30px] items-center justify-center bg-[#098c09]">
        <Svg s={24} box="0 0 24 24">
          <path d="M2 7.500l20-2.500v18L2 20.500z" fill="#fff" />
          <path d="M7 9V5q0-3 3-3.500T15 4v4M11 7V4q1-3 4-3t3 4v2" fill="none" stroke="#fff" strokeWidth="1.300" />
          <path d="M7 11l4-.5v3.500H7zM12 10.400l5-.6V14h-5zM7 15h4v3.500L7 18zM12 15h5v4l-5-.5z" fill="#098c09" />
        </Svg>
      </div>
      <Svg s={30} box="0 0 30 30" className="ml-[32px]">
        <circle cx="15" cy="15" r="14.500" fill="#fbd03c" />
        <path d="M2.500 7.500A14.500 14.500 0 0 0 14.500 29.500l6.300-11L10 19z" fill="#2ba058" />
        <path d="M2.500 7.500A14.500 14.500 0 0 1 27.600 8H15l-5 10z" fill="#dc4436" />
        <circle cx="15" cy="15" r="6.700" fill="#fff" />
        <circle cx="15" cy="15" r="5.300" fill="#4a8af4" />
      </Svg>
      <Btn cls="ml-[18px] w-[58px]">
        <Svg s={32} box="0 0 32 32">
          <path d="M7 8l8-1 1 2 15-2v18L9 27z" fill="#9ad636" stroke="#5a9a1a" />
          <path d="M8 12l22-2.500v-1.500l-15 2-1-2-6 1z" fill="#bdea6c" />
          <path d="M1 14h6v8l-6-.5z" fill="#d5d5d5" stroke="#777" />
          <path d="M3 16h1.500v1.500H3zM3 19h1.500v1.500H3z" fill="#444" />
          <path d="M12 18.500l14-1.500M15 18l3.500-4h3M16 18.200l4 3h3.500" fill="none" stroke="#222" strokeWidth="1.100" />
          <circle cx="12.500" cy="18.500" r="1.700" fill="#222" />
          <path d="M25 15v4l3.500-2.200zM21 13h2v2h-2zM23 20h2v2h-2z" fill="#222" />
        </Svg>
      </Btn>
      <Btn cls="ml-[3px] w-[60px]">
        <Svg s={32} box="0 0 32 32">
          <rect width="32" height="32" rx="2" fill="#1a46b4" />
          <path d="M16 16L0 3V0h13zM16 16L23 0h9v7z" fill="#35b4ec" />
          <path d="M16 16Q6 8 6 0h4q1 9 6 16zM16 16q2-8 4-16h5q-3 10-9 16z" fill="#c4effb" />
          <path d="M16 16Q6 12 0 13V9q8-1 16 7z" fill="#102a80" />
          <path d="M16 16Q6 17 0 24v-6q8-4 16-2zM16 16Q12 22 9 32H3q4-12 13-16z" fill="#e35ad6" />
          <path d="M16 16q10-7 16-6v3q-8-1-16 3z" fill="#e868dc" />
          <path d="M16 16q10 0 16 8v5Q26 20 16 16z" fill="#ee86e2" />
          <path d="M16 16q7 6 8 16h-6q0-10-2-16zM16 16q-3 8-3 16h3z" fill="#30b8ee" />
          <path d="M16 16q8 4 12 16h4v-1Q26 20 16 16z" fill="#102078" />
          <rect x=".5" y=".5" width="31" height="31" rx="2" fill="none" stroke="#000" strokeWidth="1.500" />
        </Svg>
      </Btn>
      <Btn cls="ml-[2px] w-[60px]"><Camera s={32} /></Btn>
      <Btn cls="ml-[2px] w-[60px]">
        <svg width="32" height="32" viewBox="0 0 32 32" className="overflow-visible">
          <ellipse cx="16" cy="23.500" rx="14" ry="6" fill="#e9c36b" stroke="#b98c34" />
          <ellipse cx="12" cy="25.500" rx="4" ry="1.800" fill="#fff" />
          <path d="M4 12l8-1.500V8l3-1 1 3 2-4h7l2 3-1 11-4 3-3-2-5 3-4-3-6-1z" fill="#1d1d1d" />
          <path d="M18 12l5-1v6l-5 1z" fill="#555" />
          <path d="M4 12.500h4v5H4z" fill="#48b4e4" />
          <text x="16" y="7" textAnchor="middle" textLength="31" lengthAdjust="spacingAndGlyphs" fontSize="7.500" fontWeight="bold" fontFamily="Liberation Sans, sans-serif" fill="#1252c8" stroke="#dfe8f8" strokeWidth="1" paintOrder="stroke">HYPERCAM</text>
        </svg>
      </Btn>
      <Palette s={32} className="ml-[16px]" />
      <Btn on cls="ml-[17px] w-[59px]">
        <Svg s={32} box="0 0 32 32">
          <path d="M12 2l17-1.500 2.500 17.500-16 1z" fill="#d8dbde" stroke="#8d9196" />
          <path d="M13.700 3.500l14-1.200 2.200 14.200-13 .8z" fill="#1a30c4" />
          <path d="M20 3l8-.6 1.200 9z" fill="#7f9cf0" />
          <path d="M4 8l6-2 2 10-6 2z" fill="#dfe2e4" stroke="#8a8f94" />
          <path d="M7 17q4-4 10-1" fill="none" stroke="#59626a" strokeWidth="1.500" />
          <path d="M2 18l20-1 4 3v9l-5 2-19-3z" fill="#a3b3bf" stroke="#6b7882" />
          <path d="M2 22l19 1 5-3" fill="none" stroke="#e3eaef" />
          <path d="M7 20v4M16 20v4" stroke="#394249" strokeWidth="1.600" />
        </Svg>
      </Btn>
      <div className="ml-auto flex items-center">
        <svg width="30" height="18" viewBox="0 0 30 18">
          <rect x=".8" y=".8" width="28.400" height="16.400" rx=".5" fill="none" stroke="#fff" strokeWidth="1.500" />
          <path d="M3 3h24v12H3z" fill="#fff" />
          <path d="M2 6.500h26M2 10.500h26M6.500 3v8M10.500 3v8M14.500 3v8M18.500 3v8M22.500 3v8M7 11v4M22 11v4" stroke="#6b5140" strokeWidth="1.100" />
        </svg>
        <Svg s={9} box="0 0 9 9" className="ml-[13px]"><path d="M4.500 2L8.500 6.500h-8z" fill="#fff" /></Svg>
        <Palette s={16} className="ml-[11px]" />
        <Svg className="ml-[9px]">
          <rect width="16" height="16" rx="1" fill="#1b8bdc" />
          <path d="M3 2h3v4H3M9 2l4 4M13 2L9 6M5 8.500h6v2.500H5zM4 13.500h3M9 13.500h4" fill="none" stroke="#fff" strokeWidth="1" />
          <path d="M0 11l5 5H0z" fill="#f0a030" />
        </Svg>
        <Camera s={16} className="ml-[8px]" />
        <Svg className="ml-[8px]">
          <rect x=".8" y=".8" width="14.400" height="10.400" fill="#3a3a3a" stroke="#b5b5b5" strokeWidth="1.200" />
          <circle cx="7.500" cy="5" r="2.900" fill="#149414" />
          <rect x="1" y="12.500" width="5" height="3" fill="#c5c5c5" /><rect x="9" y="12.500" width="5" height="3" fill="#c5c5c5" />
        </Svg>
        <Svg className="ml-[8px]">
          <path d="M1.500 0v3M4.500 0v3M0 3.500h6M.8 4v3h4.500V4M3 7v8" fill="none" stroke="#fff" strokeWidth="1.300" />
          <rect x="7.500" y="3" width="7" height="12" fill="none" stroke="#fff" strokeWidth="1.500" />
          <path d="M9.500 1.500h3" stroke="#fff" strokeWidth="2" /><rect x="9" y="9" width="4" height="4.500" fill="#fff" />
        </Svg>
        <Svg className="ml-[8px]">
          <path d="M4 0v7M.8 1.800L7.200 5M7.200 1.800L.8 5" stroke="#fff" strokeWidth="1.200" />
          <path d="M1 12h2v3H1zM4.500 9.500h2V15h-2zM8 7h2v8H8zM11 4.500h1.500V15H11zM13.500 2h1.500v13h-1.500z" fill="#8f8278" stroke="#b0a49a" strokeWidth=".4" />
        </Svg>
        <Svg className="ml-[7px]">
          <path d="M.8 5.500h2.500L7 2v12l-3.700-3.500H.8z" fill="#fff" />
          <path d="M9 5.500q1.500 2.500 0 5M11 4q2.500 4 0 8M13 2.500q3.500 5.500 0 11" fill="none" stroke="#ddd5ce" strokeWidth="1" />
        </Svg>
        <div className="ml-[19px] mr-[19px] flex flex-col items-center leading-[17px] text-white">
          <T w={27}>15:32</T>
          <T w={58}>13/07/2017</T>
        </div>
      </div>
    </div>
  );
}

export default function App() {
  return (
    <div className="relative h-[768px] w-[1366px] overflow-hidden bg-white font-['Open_Sans',sans-serif] text-[12px] leading-4 text-black">
      <Explorer />
      <Management />
      <ShrinkDialog />
      <Taskbar />
    </div>
  );
}
